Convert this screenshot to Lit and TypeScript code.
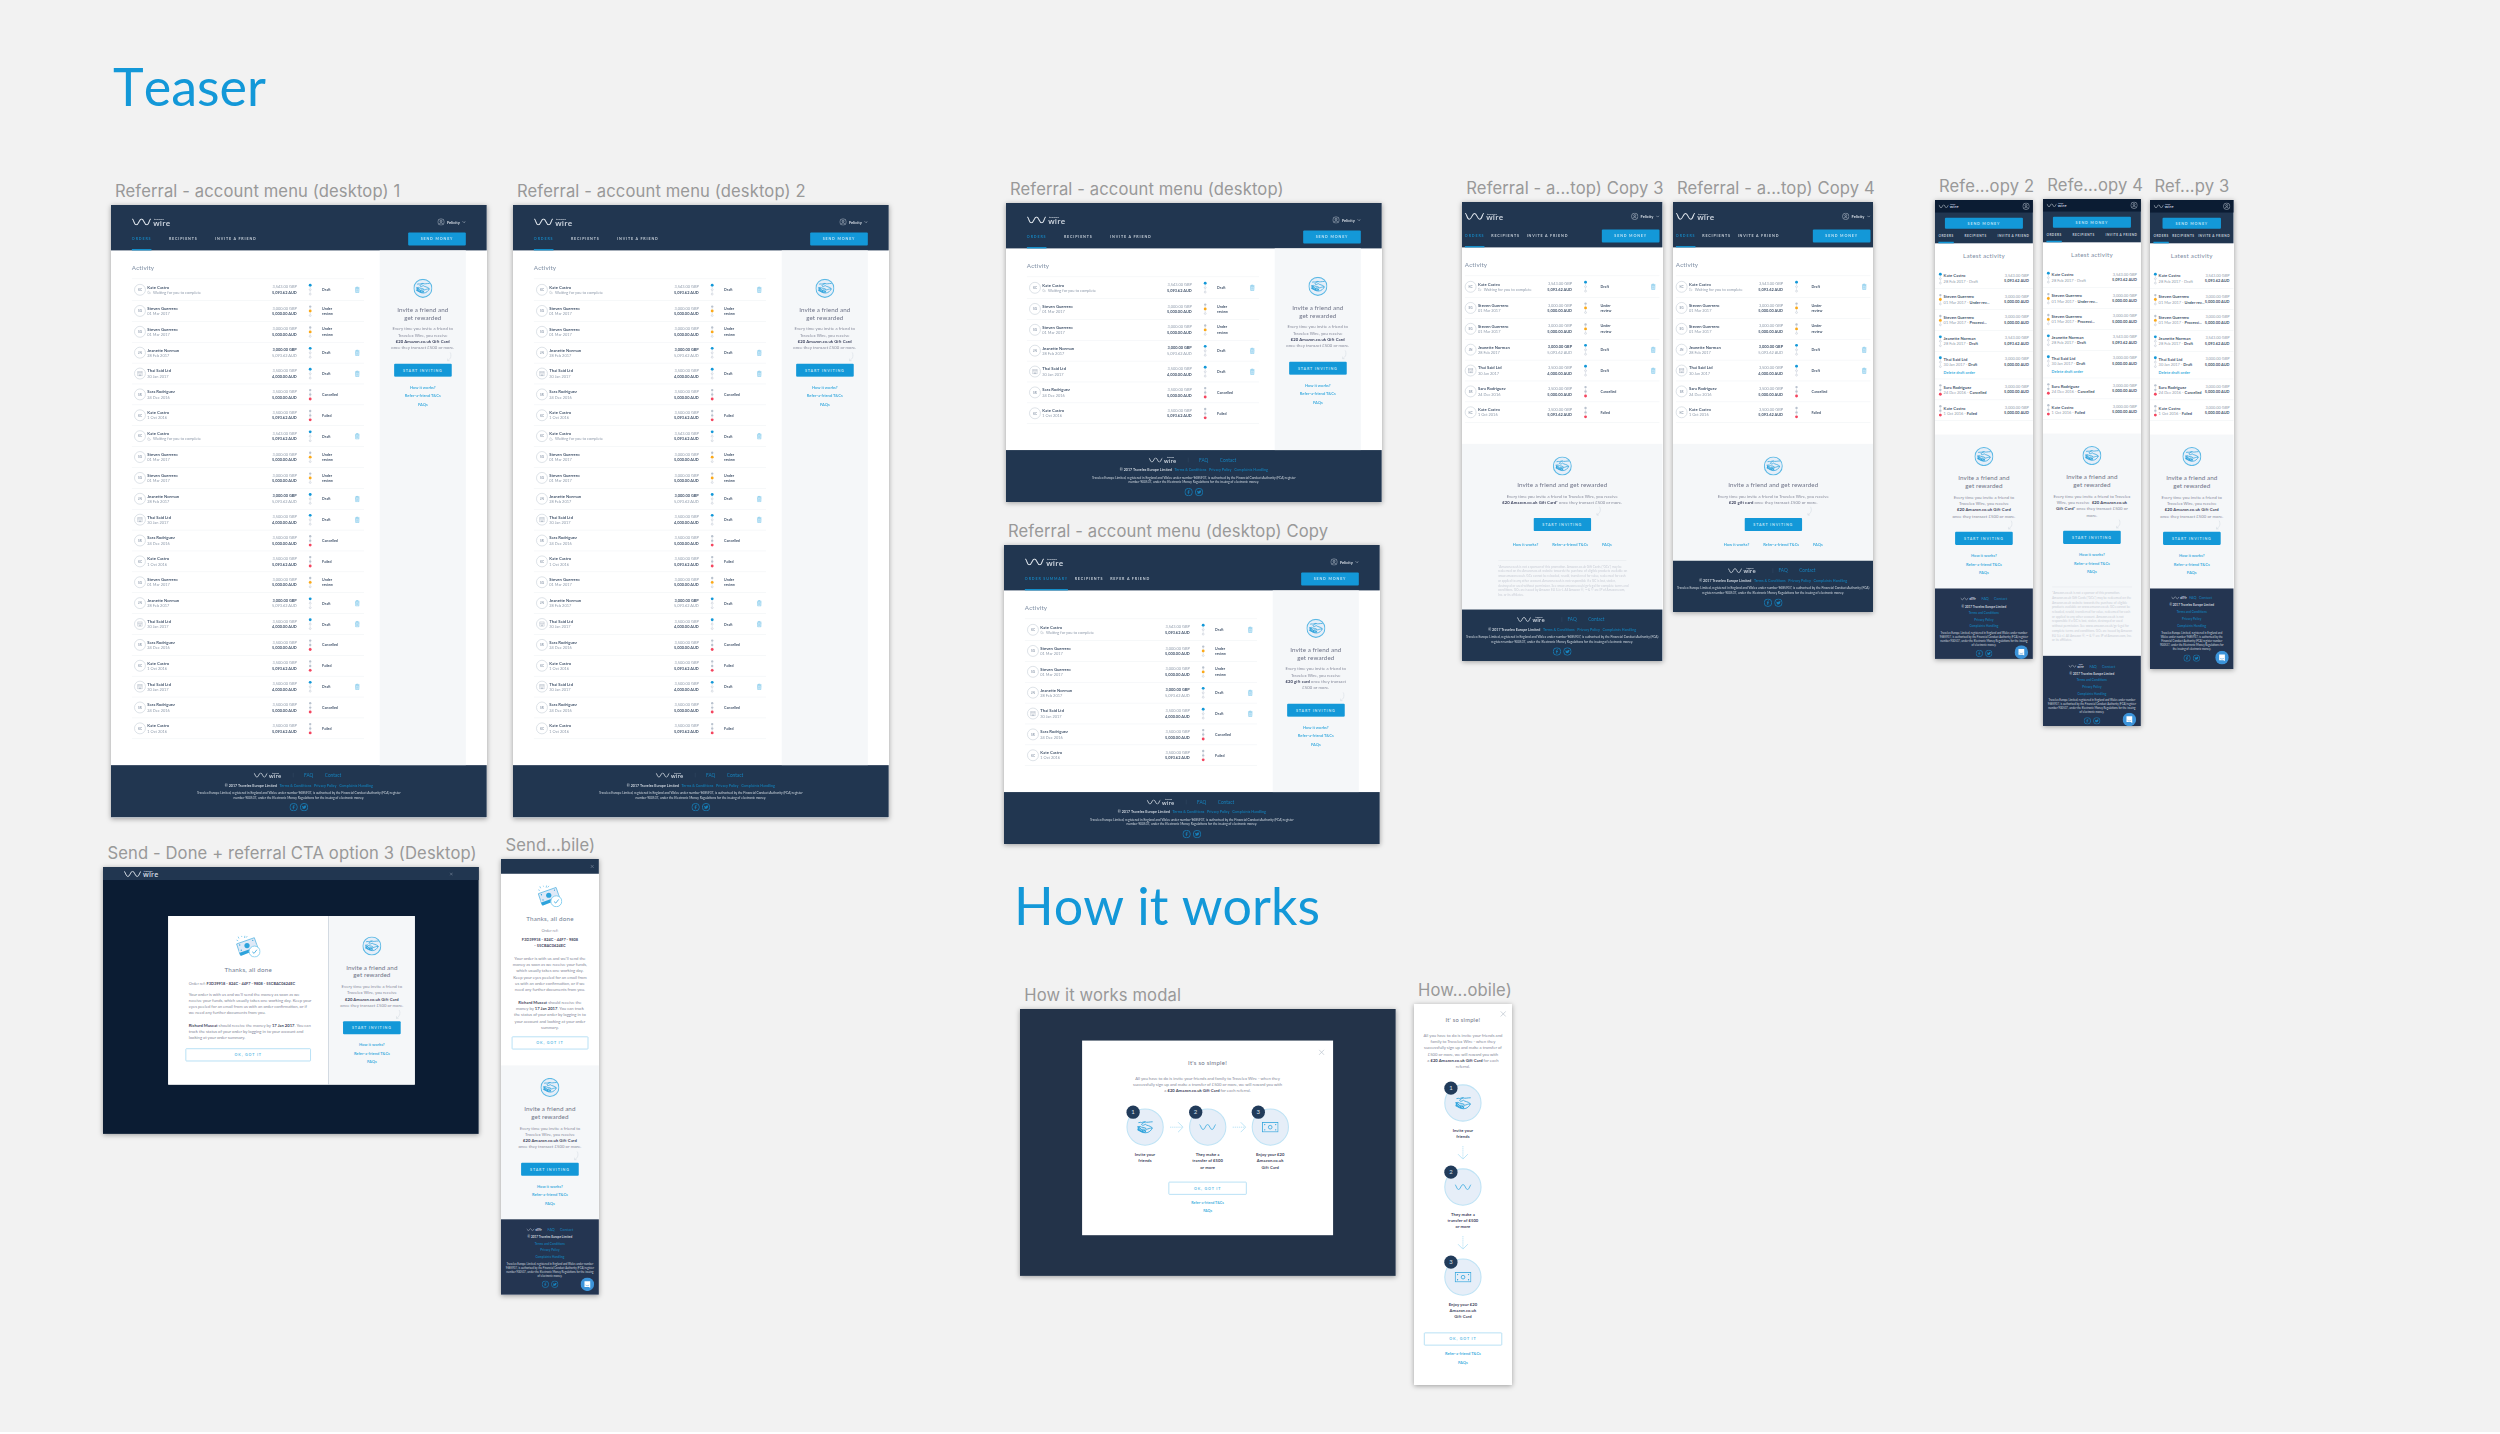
import { LitElement, html, css, svg, nothing } from 'lit'
import { customElement, property } from 'lit/decorators.js'

type Size = 'desktop' | 'tablet' | 'mobile' | 'small'

interface Order {
  initials: string
  name: string
  date: string
  from: string
  to: string
  state: 'draft' | 'review' | 'failed'
  status: string
  waiting?: boolean
  flip?: boolean
}

const kateDraft: Order = {
  initials: 'KC', name: 'Kate Castro', date: 'Waiting for you to complete',
  from: '3,543.00 GBP', to: '5,093.62 AUD', state: 'draft', status: 'Draft', waiting: true,
}
const steven: Order = {
  initials: 'SG', name: 'Steven Guerrero', date: '01 Mar 2017',
  from: '3,000.00 GBP', to: '5,000.00 AUD', state: 'review', status: 'Under review',
}
const jeanette: Order = {
  initials: 'JN', name: 'Jeanette Norman', date: '28 Feb 2017',
  from: '3,000.00 GBP', to: '5,093.62 AUD', state: 'draft', status: 'Draft', flip: true,
}
const thai: Order = {
  initials: '', name: 'Thai Said Ltd', date: '30 Jan 2017',
  from: '3,500.00 GBP', to: '4,000.00 AUD', state: 'draft', status: 'Draft',
}
const sara: Order = {
  initials: 'SR', name: 'Sara Rodriguez', date: '24 Dec 2016',
  from: '3,500.00 GBP', to: '5,000.00 AUD', state: 'failed', status: 'Cancelled',
}
const kateFailed: Order = {
  initials: 'KC', name: 'Kate Castro', date: '1 Oct 2016',
  from: '3,500.00 GBP', to: '5,093.62 AUD', state: 'failed', status: 'Failed',
}

const week = [kateDraft, steven, steven, jeanette, thai, sara, kateFailed]
const history = [
  ...week, ...week,
  steven, jeanette, thai, sara, kateFailed,
  thai, sara, kateFailed,
]

const mobileOrders = [
  { ...kateDraft, date: '28 Feb 2017', plain: true },
  { ...steven, status: 'Under rev...' },
  { ...steven, status: 'Processi...' },
  { ...jeanette, from: '3,543.00 GBP' },
  { ...thai, from: '3,000.00 GBP', to: '5,000.00 AUD', remove: true },
  { ...sara, from: '3,000.00 GBP' },
  { ...kateFailed, from: '3,000.00 GBP', to: '5,000.00 AUD' },
]

const wave = (color: string) => svg`
  <path d="M2 3 C7 3 8 25 17 25 C27 25 27 3 37 3 C47 3 47 25 57 25 C66 25 67 3 72 3"
    fill="none" stroke=${color} stroke-width="4" stroke-linecap="round" />`

const hands = svg`
  <g fill="none" stroke="#2ea3dc" stroke-width="3.2" stroke-linejoin="round" stroke-linecap="round">
    <path d="M7 7 L14 6 C18 9 23 3 30 4 C37 8 46 4 57 4" />
    <path d="M30 5 C24 7 19 10 17 14 C20 19 26 17 31 13 C36 19 49 17 57 26" />
    <path d="M3 22 L12 21 C18 27 28 23 34 29 C32 33 26 31 22 31" />
    <path d="M35 32 C43 31 49 26 57 27 C54 36 44 45 32 45 C20 45 12 38 3 34" />
  </g>
  <path d="M3 22 L11 24 L18 32 L35 36 L32 45 C20 45 12 38 3 34 Z" fill="#2ea3dc" />
  <path d="M7 28 L18 37 M22 37 L30 41" stroke="#e6eef8" stroke-width="2" />`

const note = svg`
  <g fill="none" stroke="#2ea3dc" stroke-width="3">
    <rect x="2" y="2" width="60" height="36" />
    <circle cx="32" cy="20" r="7" />
  </g>
  <g fill="#2ea3dc">
    <circle cx="11" cy="10" r="2.5" /><circle cx="53" cy="10" r="2.5" />
    <circle cx="11" cy="30" r="2.5" /><circle cx="53" cy="30" r="2.5" />
  </g>`

const cross = (size: number, color: string) => html`
  <svg width=${size} height=${size} viewBox="0 0 24 24">
    <path d="M2 2 L22 22 M22 2 L2 22" fill="none" stroke=${color} stroke-width="2.5" />
  </svg>`

const userIcon = html`
  <svg width="28" height="28" viewBox="0 0 28 28">
    <g fill="none" stroke="#c3ccd8" stroke-width="2">
      <circle cx="14" cy="14" r="12.5" />
      <circle cx="14" cy="11" r="3.8" />
      <path d="M8 21.5 C8 15.5 20 15.5 20 21.5" />
    </g>
  </svg>`

const base = css`
  :host {
    display: block;
    box-sizing: border-box;
  }
  *, *::before, *::after {
    box-sizing: border-box;
  }
  svg {
    display: block;
    flex: none;
  }
  p, h2 {
    margin: 0;
    font-weight: 400;
  }
  .cta {
    display: flex;
    align-items: center;
    justify-content: center;
    height: 50px;
    border-radius: 4px;
    background: #1398d8;
    color: #bfe3f5;
    font-size: 14px;
    font-weight: 700;
    letter-spacing: 3.2px;
    white-space: nowrap;
  }
  .cta.ghost {
    background: none;
    border: 3px solid #a5d9f2;
    color: #63bce6;
  }
  .link {
    color: #45afe0;
  }
  b {
    color: #3f4560;
  }
`

@customElement('wire-logo')
export class WireLogo extends LitElement {
  static styles = [base, css`
    .logo {
      display: flex;
      align-items: center;
      gap: 8px;
      color: #d3dae3;
    }
    .words {
      display: flex;
      flex-direction: column;
      font-family: "Open Sans", sans-serif;
    }
    .top {
      font-size: 9px;
      line-height: 5px;
      font-weight: 700;
      padding-left: 3px;
    }
    .main {
      font-size: 30px;
      line-height: 22px;
      font-weight: 600;
      letter-spacing: 0.6px;
    }
  `]

  render() {
    return html`
      <div class="logo">
        <svg width="74" height="28" viewBox="0 0 74 28">${wave('#dfe5ec')}</svg>
        <div class="words"><span class="top">travelex</span><span class="main">wire</span></div>
      </div>
    `
  }
}

@customElement('site-header')
export class SiteHeader extends LitElement {
  static styles = [base, css`
    .desktop {
      height: 174px;
      padding: 0 80px;
      background: #213650;
      display: flex;
      flex-direction: column;
    }
    .tablet {
      padding: 0 11px;
    }
    .brand {
      display: flex;
      justify-content: space-between;
      align-items: center;
      height: 60px;
      margin-top: 35px;
    }
    .tablet .brand {
      margin-top: 25px;
      margin-bottom: 10px;
    }
    .user {
      display: flex;
      align-items: center;
      color: #d5dce4;
      font-size: 15.5px;
      font-weight: 700;
      gap: 9px;
    }
    .bar {
      flex: 1;
      display: flex;
      justify-content: space-between;
    }
    .bar .cta {
      width: 221px;
      margin-top: 10px;
    }
    nav {
      display: flex;
      gap: 67px;
      color: #c3ccd6;
      font-size: 14px;
      font-weight: 700;
      letter-spacing: 3.2px;
      white-space: nowrap;
    }
    nav.tight {
      gap: 26px;
    }
    nav span {
      border-bottom: 5px solid transparent;
      line-height: 68px;
    }
    nav .on {
      color: #1681bb;
      border-color: #1398d8;
    }
    .mobile {
      height: 166px;
      background: #213650;
      display: flex;
      flex-direction: column;
    }
    .strip {
      height: 48px;
      padding: 0 12px 0 14px;
      background: #0b1c33;
      display: flex;
      align-items: center;
      justify-content: space-between;
    }
    .strip wire-logo {
      zoom: 0.52;
    }
    .mobile .cta {
      margin: 20px 38px 0;
      height: 42px;
    }
    .small .cta {
      margin: 20px 48px 0;
    }
    .mobile nav {
      margin: 8px 13px 0;
      gap: 0;
      justify-content: space-between;
      font-size: 12px;
      letter-spacing: 1.8px;
    }
    .mobile nav span {
      line-height: 42px;
      border-bottom-width: 6px;
    }
    .mobile nav .on {
      color: #c3ccd6;
    }
  `]

  @property() size: Size = 'desktop'
  @property({ type: Array }) tabs = ['ORDERS', 'RECIPIENTS', 'INVITE A FRIEND']
  @property({ type: Boolean }) tight = false

  render() {
    const nav = html`
      <nav class=${this.tight ? 'tight' : ''}>
        ${this.tabs.map((tab, i) => html`<span class=${i === 0 ? 'on' : ''}>${tab}</span>`)}
      </nav>`
    if (this.size === 'mobile' || this.size === 'small') {
      return html`
        <header class="mobile ${this.size}">
          <div class="strip"><wire-logo></wire-logo>${userIcon}</div>
          <div class="cta">SEND MONEY</div>
          ${nav}
        </header>`
    }
    return html`
      <header class="desktop ${this.size}">
        <div class="brand">
          <wire-logo></wire-logo>
          <div class="user">
            ${userIcon}<span>Felicity</span>
            <svg width="14" height="8" viewBox="0 0 14 8">
              <path d="M1 1 L7 7 L13 1" fill="none" stroke="#c3ccd8" stroke-width="2" />
            </svg>
          </div>
        </div>
        <div class="bar">${nav}<div class="cta">SEND MONEY</div></div>
      </header>`
  }
}

@customElement('status-dots')
export class StatusDots extends LitElement {
  static styles = [base, css`
    .dots {
      display: flex;
      flex-direction: column;
      align-items: center;
      width: 12px;
    }
    .dot {
      width: 9px;
      height: 9px;
      border-radius: 50%;
      background: #b9c2ce;
      margin: 1px 0;
    }
    .dot.open {
      background: #fff;
      border: 2px solid #b9c2ce;
    }
    .dot.on {
      width: 11px;
      height: 11px;
      margin: 0;
    }
    .line {
      width: 2px;
      height: 6px;
      background: #ccd3dc;
    }
    .draft {
      background: #1398d8;
    }
    .review {
      background: #fba919;
    }
    .failed {
      background: #f4455f;
    }
  `]

  @property() state: Order['state'] = 'draft'

  render() {
    const active = ['draft', 'review', 'failed'].indexOf(this.state)
    const dot = (i: number) =>
      html`<i class="dot ${i === active ? `on ${this.state}` : i > active ? 'open' : ''}"></i>`
    return html`
      <div class="dots">${dot(0)}<i class="line"></i>${dot(1)}<i class="line"></i>${dot(2)}</div>
    `
  }
}

@customElement('activity-list')
export class ActivityList extends LitElement {
  static styles = [base, css`
    h2 {
      font-size: 24px;
      letter-spacing: 0.6px;
      line-height: 30px;
      padding: 53px 0 25px;
      color: #7d8da3;
    }
    .row {
      display: flex;
      align-items: center;
      height: 80px;
      border-bottom: 2px solid #eef1f4;
    }
    .row:first-of-type {
      height: 85px;
      border-top: 2px solid #eef1f4;
    }
    .avatar {
      width: 44px;
      height: 44px;
      margin-left: 9px;
      border: 2px solid #c0c8d3;
      border-radius: 50%;
      display: flex;
      align-items: center;
      justify-content: center;
      font-size: 12px;
      font-weight: 700;
      color: #98a4b4;
    }
    .who {
      width: 260px;
      margin-left: 6px;
      line-height: 21px;
    }
    .name {
      font-size: 16px;
      font-weight: 700;
      color: #47586f;
    }
    .sub {
      display: flex;
      align-items: center;
      gap: 8px;
      font-size: 15px;
      color: #8f9bab;
      white-space: nowrap;
    }
    .money {
      width: 313px;
      text-align: right;
      font-size: 15px;
      line-height: 21px;
      color: #8f9bab;
    }
    .money .strong {
      font-weight: 700;
      color: #47586f;
    }
    status-dots {
      margin-left: 45px;
    }
    .status {
      width: 60px;
      margin-left: 40px;
      font-size: 14px;
      line-height: 21px;
      font-weight: 700;
      color: #47586f;
    }
    .trash {
      margin-left: 65px;
    }
    .tablet .avatar {
      margin-left: 0;
    }
    .tablet .money {
      width: 101px;
    }
    .tablet .status {
      margin-left: 52px;
    }
    .tablet .trash {
      margin-left: 132px;
    }
  `]

  @property() size: Size = 'desktop'
  @property({ type: Array }) orders: Order[] = week

  render() {
    return html`
      <h2>Activity</h2>
      <div class=${this.size}>${this.orders.map((o) => this.renderRow(o))}</div>
    `
  }

  renderRow(o: Order) {
    return html`
      <div class="row">
        <div class="avatar">${o.initials || html`
          <svg width="20" height="20" viewBox="0 0 20 20">
            <path d="M1 1 H19 V19 H1 Z M1 7 H19 M5 12 H8 M12 12 H15 M8 19 V15 H12 V19"
              fill="none" stroke="#98a4b4" stroke-width="2" />
          </svg>`}</div>
        <div class="who">
          <div class="name">${o.name}</div>
          <div class="sub">
            ${o.waiting ? html`
              <svg width="14" height="14" viewBox="0 0 14 14">
                <path d="M7 1 A6 6 0 1 0 13 7 M7 4 V7 H10" fill="none" stroke="#9aa5b4" stroke-width="1.5" />
              </svg>` : nothing}
            <span>${o.date}</span>
          </div>
        </div>
        <div class="money">
          <div class=${o.flip ? 'strong' : ''}>${o.from}</div>
          <div class=${o.flip ? '' : 'strong'}>${o.to}</div>
        </div>
        <status-dots .state=${o.state}></status-dots>
        <div class="status">${o.status}</div>
        ${o.state === 'draft' ? html`
          <svg class="trash" width="20" height="25" viewBox="0 0 20 25">
            <path d="M1 5 H19 M7 5 V1.5 H13 V5 M3 8 L4 23.5 H16 L17 8 Z M8 11 V20 M12 11 V20"
              fill="#e3f3fc" stroke="#6fc1e8" stroke-width="2" />
          </svg>` : nothing}
      </div>`
  }
}

@customElement('mobile-activity')
export class MobileActivity extends LitElement {
  static styles = [base, css`
    h2 {
      padding-top: 31px;
      line-height: 30px;
      margin-bottom: 34px;
      text-align: center;
      font-size: 24px;
      letter-spacing: 0.9px;
      color: #7d8da3;
    }
    .row {
      display: flex;
      padding: 19px 15px 0 14px;
      height: 80px;
      border-bottom: 2px solid #eef1f4;
      line-height: 21px;
      font-size: 15px;
      color: #8f9bab;
    }
    .row.tall {
      height: 106px;
    }
    .row status-dots {
      margin: -1px 7px 0 0;
    }
    .who {
      flex: 1;
      white-space: nowrap;
    }
    .name {
      font-size: 16px;
      font-weight: 700;
      color: #47586f;
    }
    .strong {
      font-weight: 700;
      color: #47586f;
    }
    .remove {
      line-height: 38px;
      font-weight: 700;
    }
    .money {
      text-align: right;
      margin-top: -2px;
    }
  `]

  render() {
    return html`
      <h2>Latest activity</h2>
      ${mobileOrders.map((o: any) => html`
        <div class="row ${o.remove ? 'tall' : ''}">
          <status-dots .state=${o.state}></status-dots>
          <div class="who">
            <div class="name">${o.name}</div>
            <div>${o.date} - <span class=${o.plain ? '' : 'strong'}>${o.status}</span></div>
            ${o.remove ? html`<div class="link remove">Delete draft order</div>` : nothing}
          </div>
          <div class="money"><div>${o.from}</div><div class="strong">${o.to}</div></div>
        </div>`)}
    `
  }
}

@customElement('invite-panel')
export class InvitePanel extends LitElement {
  static styles = [base, css`
    :host {
      background: #f5f7f9;
      text-align: center;
    }
    .panel {
      display: flex;
      flex-direction: column;
      align-items: center;
      padding-top: 48px;
      white-space: nowrap;
    }
    h2 {
      margin-top: 30px;
      font-size: 24px;
      line-height: 29px;
      letter-spacing: 0.3px;
      color: #6f7488;
    }
    .copy {
      margin-top: 19px;
      font-size: 16px;
      line-height: 24px;
      letter-spacing: 0.25px;
      color: #85899a;
    }
    .act {
      position: relative;
      margin-top: 49px;
    }
    .act .cta {
      width: 221px;
    }
    .hook {
      position: absolute;
      right: 0;
      top: -45px;
    }
    .links {
      margin-top: 25px;
      display: flex;
      flex-direction: column;
      font-size: 15.5px;
      font-weight: 700;
      line-height: 32px;
    }
    .tablet h2 {
      margin-top: 20px;
    }
    .tablet .act {
      margin-top: 47px;
    }
    .tablet .hook {
      right: -38px;
    }
    .tablet .links {
      flex-direction: row;
      margin-top: 37px;
      gap: 53px;
    }
    .legal {
      width: 306px;
      margin-top: 43px;
      padding-top: 14px;
      border-top: 2px solid #e4e8ec;
      text-align: left;
      font-size: 12px;
      line-height: 18px;
      color: #c9cdd6;
    }
    .tablet .legal {
      width: 491px;
    }
  `]

  @property() size: Size = 'desktop'
  @property() variant: 'amazon' | 'star' | 'gift' = 'amazon'

  get copy() {
    if (this.size === 'tablet') {
      return html`Every time you invite a friend to Travelex Wire, you receive<br>
        <b>${this.variant === 'gift' ? '£20 gift card' : '£20 Amazon.co.uk Gift Card*'}</b> once they transact £500 or more.`
    }
    if (this.variant === 'gift') {
      return html`Every time you invite a friend to<br>Travelex Wire, you receive<br>
        <b>£20 gift card</b> once they transact<br>£500 or more.`
    }
    if (this.variant === 'star') {
      return html`Every time you invite a friend to Travelex<br>Wire, you receive &nbsp;<b>£20 Amazon.co.uk<br>
        Gift Card*</b> once they transact £500 or<br>more.`
    }
    return html`Every time you invite a friend to<br>Travelex Wire, you receive<br>
      <b>£20 Amazon.co.uk Gift Card</b><br>once they transact £500 or more.`
  }

  get legal() {
    return this.size === 'tablet'
      ? html`*Amazon.co.uk is not a sponsor of this promotion. Amazon.co.uk Gift Cards ("GCs") may be<br>
          redeemed on the Amazon.co.uk website towards the purchase of eligible products available on<br>
          www.amazon.co.uk. GCs cannot be reloaded, resold, transferred for value, redeemed for cash<br>
          or applied to any other account. Amazon.co.uk is not responsible if a GC is lost, stolen,<br>
          destroyed or used without permission. See www.amazon.co.uk/gc-legal for complete terms and<br>
          conditions. GCs are issued by Amazon EU S.à r.l. All Amazon ®, ™ & © are IP of Amazon.com,<br>
          Inc. or its affiliates.`
      : html`*Amazon.co.uk is not a sponsor of this promotion.<br>
          Amazon.co.uk Gift Cards ("GCs") may be redeemed on the<br>
          Amazon.co.uk website towards the purchase of eligible<br>
          products available on www.amazon.co.uk. GCs cannot be<br>
          reloaded, resold, transferred for value, redeemed for cash<br>
          or applied to any other account. Amazon.co.uk is not<br>
          responsible if a GC is lost, stolen, destroyed or used<br>
          without permission. See www.amazon.co.uk/gc-legal for<br>
          complete terms and conditions. GCs are issued by Amazon<br>
          EU S.à r.l. All Amazon ®, ™ & © are IP of Amazon.com, Inc.<br>
          or its affiliates.`
  }

  render() {
    return html`
      <div class="panel ${this.size}">
        <svg width="73" height="73" viewBox="0 0 73 73">
          <circle cx="36.5" cy="36.5" r="34.5" fill="#e6eef8" stroke="#5cb9e5" stroke-width="4" />
          <g transform="translate(9.5 14) scale(0.9)">${hands}</g>
        </svg>
        <h2>${this.size === 'tablet' ? 'Invite a friend and get rewarded' : html`Invite a friend and<br>get rewarded`}</h2>
        <p class="copy">${this.copy}</p>
        <div class="act">
          <svg class="hook" width="20" height="38" viewBox="0 0 20 38">
            <path d="M14 2 C22 16 14 28 4 34 M4 26 L4 34 L12 34" fill="none" stroke="#d3dae2" stroke-width="2" />
          </svg>
          <div class="cta">START INVITING</div>
        </div>
        <div class="links link"><span>How it works?</span><span>Refer-a-friend T&Cs</span><span>FAQs</span></div>
        ${this.variant === 'star' ? html`<p class="legal">${this.legal}</p>` : nothing}
      </div>
    `
  }
}

@customElement('site-footer')
export class SiteFooter extends LitElement {
  static styles = [base, css`
    footer {
      display: flex;
      flex-direction: column;
      align-items: center;
      height: 200px;
      background: #213650;
      color: #c9d1da;
      white-space: nowrap;
      text-align: center;
      font-size: 14px;
      line-height: 24px;
    }
    .top {
      display: flex;
      align-items: center;
      width: 346px;
      height: 30px;
      margin-top: 23px;
      font-size: 18px;
      color: #1683be;
    }
    .top wire-logo {
      zoom: 0.72;
    }
    .rule {
      width: 2px;
      height: 18px;
      margin: 0 41px 0 44px;
      background: #344a66;
    }
    .tablet .rule {
      margin: 0 20px 0 65px;
    }
    .top .contact {
      margin-left: 44px;
    }
    .copyright {
      display: flex;
      gap: 10px;
      margin-top: 12px;
      font-weight: 700;
    }
    .terms {
      display: flex;
      gap: 10px;
      color: #1478ae;
    }
    .reg {
      margin-top: 8px;
      font-size: 12.3px;
      line-height: 18px;
      color: #cfd7df;
    }
    .social {
      display: flex;
      gap: 8px;
      margin-top: 12px;
    }
    .mobile {
      position: relative;
      height: 270px;
      background: #243551;
    }
    .small {
      height: 309px;
    }
    .mobile .top {
      width: auto;
      margin-top: 25px;
      font-size: 14.5px;
    }
    .mobile .top wire-logo {
      zoom: 0.4;
    }
    .mobile .faq {
      margin-left: 21px;
    }
    .mobile .contact {
      margin-left: 20px;
    }
    .mobile .copyright {
      flex-direction: column;
      gap: 0;
      margin-top: 3px;
      font-size: 12px;
      line-height: 22px;
    }
    .mobile .terms {
      flex-direction: column;
      gap: 0;
      line-height: 26px;
    }
    .mobile .reg {
      margin-top: 6px;
      font-size: 10.6px;
      line-height: 15px;
    }
    .mobile .social {
      margin-top: 11px;
    }
    .mobile.small .top {
      margin-top: 21px;
    }
    .small .faq,
    .small .contact {
      margin-left: 9px;
    }
    .mobile.small .terms {
      line-height: 27.5px;
    }
    .mobile.small .social {
      margin-top: 13px;
    }
    .chat {
      position: absolute;
      right: 18px;
      bottom: 0;
    }
    .small .chat {
      bottom: 18px;
    }
    .raised .chat {
      bottom: 14px;
    }
    .mobile.raised {
      height: 289px;
    }
  `]

  @property() size: Size = 'desktop'
  @property({ type: Boolean }) raised = false

  get registration() {
    switch (this.size) {
      case 'small':
        return html`Travelex Europe Limited, registered in England and<br>Wales under number 9685937, is authorised by the<br>
          Financial Conduct Authority (FCA) register number<br>900537, under the Electronic Money Regulations for<br>the issuing of electronic money.`
      case 'mobile':
        return html`Travelex Europe Limited, registered in England and Wales under number<br>9685937, is authorised by the Financial Conduct Authority (FCA) register<br>
          number 900537, under the Electronic Money Regulations for the issuing<br>of electronic money.`
      case 'tablet':
        return html`Travelex Europe Limited, registered in England and Wales under number 9685937, is authorised by the Financial Conduct Authority (FCA)<br>
          register number 900537, under the Electronic Money Regulations for the issuing of electronic money.`
      default:
        return html`Travelex Europe Limited, registered in England and Wales under number 9685937, is authorised by the Financial Conduct Authority (FCA) register<br>
          number 900537, under the Electronic Money Regulations for the issuing of electronic money.`
    }
  }

  render() {
    const compact = this.size === 'mobile' || this.size === 'small'
    const d = compact ? 28 : 32
    return html`
      <footer class="${compact ? 'mobile' : ''} ${this.size} ${this.raised ? 'raised' : ''}">
        <div class="top">
          <wire-logo></wire-logo>
          ${compact ? nothing : html`<i class="rule"></i>`}
          <span class="faq">FAQ</span><span class="contact">Contact</span>
        </div>
        <div class="copyright">
          <span>© 2017 Travelex Europe Limited</span>
          <span class="terms">
            <span>${compact ? 'Terms and Conditions' : 'Terms & Conditions'}</span>
            <span>Privacy Policy</span><span>Complaints Handling</span>
          </span>
        </div>
        <p class="reg">${this.registration}</p>
        <div class="social">
          <svg width=${d} height=${d} viewBox="0 0 32 32">
            <circle cx="16" cy="16" r="14.5" fill="none" stroke="#1683be" stroke-width="3" />
            <path d="M20 9 H18 C16 9 15 10 15 12 V24 M12 16 H20" fill="none" stroke="#1683be" stroke-width="3" />
          </svg>
          <svg width=${d} height=${d} viewBox="0 0 32 32">
            <circle cx="16" cy="16" r="14.5" fill="none" stroke="#1683be" stroke-width="3" />
            <path d="M8 20 C11 20 12 19 12 19 C9 18 8 14 9 11 C11 13 13 14 16 14 C16 10 20 9 22 11 L25 10 L23 14 C23 22 14 25 8 20 Z" fill="#1683be" />
          </svg>
        </div>
        ${compact ? html`
          <svg class="chat" width="52" height="52" viewBox="0 0 52 52">
            <circle cx="26" cy="26" r="26" fill="#3c94da" />
            <path d="M15 14 H37 V39 L31 36 H15 Z" fill="#fff" />
            <path d="M19 29 C23 32 29 32 33 29" fill="none" stroke="#3c94da" stroke-width="2" />
          </svg>` : nothing}
      </footer>
    `
  }
}

@customElement('done-panel')
export class DonePanel extends LitElement {
  static styles = [base, css`
    :host {
      background: #fff;
    }
    .done {
      display: flex;
      flex-direction: column;
      align-items: center;
      padding: 75px 67px 0;
      color: #85899a;
      font-size: 16px;
      line-height: 24px;
      white-space: nowrap;
    }
    h2 {
      margin-top: 30px;
      font-size: 24px;
      line-height: 30px;
      letter-spacing: 0.8px;
      color: #6f7d92;
    }
    p {
      width: 456px;
    }
    .ref {
      margin-top: 26px;
      font-size: 15px;
    }
    .text {
      margin-top: 18px;
    }
    .text + .text {
      margin-top: 24px;
    }
    .cta {
      width: 481px;
      margin-top: 28px;
    }
    .mobile {
      padding: 44px 40px 0;
      text-align: center;
    }
    .mobile h2 {
      margin-top: 27px;
    }
    .mobile p {
      width: auto;
    }
    .mobile .ref {
      margin-top: 20px;
    }
    .mobile .ref b {
      display: block;
      margin-top: 10px;
    }
    .mobile .text {
      margin-top: 25px;
    }
    .mobile .text + .text {
      margin-top: 24px;
    }
    .mobile .cta {
      width: 294px;
      margin-top: 23px;
    }
  `]

  @property() size: Size = 'desktop'

  render() {
    const mobile = this.size === 'mobile'
    return html`
      <div class="done ${this.size}">
        <svg width="94" height="84" viewBox="0 0 94 84">
          <path d="M8 4 L11 11 M21 1 L22 5 M34 0 L32 9 M2 17 L8 20 M43 2 L38 8" stroke="#6fc3ea" stroke-width="3" />
          <path d="M2 32 L70 8 L84 48 L16 74 Z" fill="#dfe9f7" stroke="#53b4e2" stroke-width="3" />
          <path d="M12 64 L78 38 L84 52 L18 78 Z" fill="#2ea3dc" />
          <path d="M10 58 L78 34 L80 42 L14 66 Z" fill="#dfe9f7" />
          <circle cx="42" cy="38" r="10" fill="#2ea3dc" />
          <g fill="#2ea3dc"><circle cx="14" cy="36" r="2.5" /><circle cx="64" cy="18" r="2.5" /><circle cx="20" cy="56" r="2.5" /></g>
          <circle cx="71" cy="61" r="21" fill="#fff" stroke="#7ccbee" stroke-width="3.5" />
          <path d="M62 62 L69 68 L80 54" fill="none" stroke="#2ea3dc" stroke-width="3" />
        </svg>
        <h2>Thanks, all done</h2>
        <p class="ref">Order ref: ${mobile
          ? html`<b>F3D39918 - 824C - 44F7 - 9808<br>- 55CBAC0624EC</b>`
          : html`<b>F3D39918 - 824C - 44F7 - 9808 - 55CBAC0624EC</b>`}</p>
        <p class="text">${mobile
          ? html`Your order is with us and we'll send the<br>money as soon as we receive your funds,<br>
              which usually takes one working day.<br>Keep your eyes peeled for an email from<br>
              us with an order confirmation, or if we<br>need any further documents from you.`
          : html`Your order is with us and we'll send the money as soon as we<br>
              receive your funds, which usually takes one working day. Keep your<br>
              eyes peeled for an email from us with an order confirmation, or if<br>
              we need any further documents from you.`}</p>
        <p class="text">${mobile
          ? html`<b>Richard Muscat</b> should receive the<br>money by <b>17 Jan 2017</b>. You can track<br>
              the status of your order by logging in to<br>your account and looking at your order<br>summary.`
          : html`<b>Richard Muscat</b> should receive the money by <b>17 Jan 2017</b>. You can<br>
              track the status of your order by logging in to your account and<br>
              looking at your order summary.`}</p>
        <div class="cta ghost">OK, GOT IT</div>
      </div>
    `
  }
}

@customElement('how-panel')
export class HowPanel extends LitElement {
  static styles = [base, css`
    :host {
      background: #fff;
    }
    .how {
      position: relative;
      display: flex;
      flex-direction: column;
      align-items: center;
      padding-top: 71px;
      text-align: center;
      color: #85899a;
      font-size: 16px;
      line-height: 24px;
      white-space: nowrap;
    }
    .close {
      position: absolute;
      right: 32px;
      top: 33px;
    }
    h2 {
      font-size: 23px;
      line-height: 30px;
      letter-spacing: 1px;
      color: #6f7488;
    }
    .lead {
      margin-top: 31px;
    }
    .steps {
      display: flex;
      margin-top: 56px;
    }
    .step {
      width: 143px;
      height: 240px;
      color: #3f4560;
      font-weight: 700;
      letter-spacing: 0.2px;
    }
    .disc {
      position: relative;
      width: 143px;
      height: 143px;
      margin-bottom: 22px;
      border: 4px solid #bfe3f5;
      border-radius: 50%;
      background: #e6eef8;
      display: flex;
      align-items: center;
      justify-content: center;
    }
    .num {
      position: absolute;
      left: -4px;
      top: -15px;
      width: 51px;
      height: 51px;
      border-radius: 50%;
      background: #213b5a;
      color: #d8e0ea;
      font-size: 23px;
      line-height: 51px;
      font-weight: 400;
    }
    .arrow {
      margin: 50px 20px 0 22px;
    }
    .cta {
      width: 300px;
      margin-top: 41px;
    }
    .links {
      display: flex;
      flex-direction: column;
      margin-top: 13px;
      line-height: 32px;
      font-size: 14px;
      font-weight: 700;
    }
    .mobile {
      padding-top: 47px;
    }
    .mobile .close {
      right: 21px;
      top: 26px;
    }
    .mobile h2 {
      font-size: 22px;
    }
    .mobile .steps {
      flex-direction: column;
      align-items: center;
      margin-top: 56px;
    }
    .mobile .step {
      height: 213px;
    }
    .mobile .step ~ .step {
      height: 236px;
    }
    .mobile .disc {
      margin-bottom: 20px;
    }
    .mobile .arrow {
      margin: 27px 0 38px;
      transform: rotate(90deg);
    }
    .mobile .cta {
      margin-top: 48px;
    }
    .mobile .links {
      font-size: 15.5px;
      margin-top: 15px;
    }
  `]

  @property() size: Size = 'desktop'

  render() {
    const mobile = this.size === 'mobile'
    const arrow = html`
      <svg class="arrow" width="55" height="44" viewBox="0 0 55 44">
        <path d="M2 22 H50" fill="none" stroke="#a9dcf3" stroke-width="3" stroke-dasharray="5 3" />
        <path d="M33 3 L52 22 L33 41" fill="none" stroke="#a9dcf3" stroke-width="3" />
      </svg>`
    const step = (n: number, icon: unknown, label: unknown) => html`
      <div class="step">
        <div class="disc"><span class="num">${n}</span>${icon}</div>
        ${label}
      </div>`
    return html`
      <div class="how ${this.size}">
        <div class="close">${cross(24, '#b5bfcb')}</div>
        <h2>${mobile ? "It' so simple!" : "It's so simple!"}</h2>
        <p class="lead">${mobile
          ? html`All you have to do is invite your friends and<br>family to Travelex Wire - when they<br>
              successfully sign up and make a transfer of<br>£500 or more, we will reward you with<br>
              a <b>£20 Amazon.co.uk Gift Card</b> for each<br>referral.`
          : html`All you have to do is invite your friends and family to Travelex Wire - when they<br>
              successfully sign up and make a transfer of £500 or more, we will reward you with<br>
              a <b>£20 Amazon.co.uk Gift Card</b> for each referral.`}</p>
        <div class="steps">
          ${step(1, html`<svg width="62" height="50" viewBox="0 0 60 48">${hands}</svg>`, html`Invite your<br>friends`)}
          ${arrow}
          ${step(2, html`<svg width="64" height="25" viewBox="0 0 74 28">${wave('#4fb3e2')}</svg>`, html`They make a<br>transfer of £500<br>or more`)}
          ${arrow}
          ${step(3, html`<svg width="64" height="40" viewBox="0 0 64 40">${note}</svg>`, html`Enjoy your £20<br>Amazon.co.uk<br>Gift Card`)}
        </div>
        <div class="cta ghost">OK, GOT IT</div>
        <div class="links link"><span>Refer-a-friend T&Cs</span><span>FAQs</span></div>
      </div>
    `
  }
}

// One labelled screen on the canvas, laid out at full size and shrunk to the canvas zoom level.
@customElement('art-board')
export class ArtBoard extends LitElement {
  static zoom = 0.2609

  static styles = [base, css`
    :host {
      position: absolute;
    }
    .label {
      position: absolute;
      left: 4px;
      bottom: 100%;
      padding-bottom: 4px;
      color: #999;
      font: 16.6px/20px Inter, sans-serif;
      letter-spacing: 0.12px;
      white-space: nowrap;
    }
    .frame {
      overflow: hidden;
      background: #fff;
      box-shadow: 0 1px 5px rgba(0, 0, 0, 0.35);
    }
    .screen {
      transform-origin: 0 0;
    }
  `]

  @property() label = ''
  @property({ type: Number }) w = 1440
  @property({ type: Number }) h = 1024

  render() {
    const k = ArtBoard.zoom
    return html`
      <div class="label">${this.label}</div>
      <div class="frame" style="width:${this.w * k}px;height:${this.h * k}px">
        <div class="screen" style="width:${this.w}px;height:${this.h}px;transform:scale(${k})"><slot></slot></div>
      </div>
    `
  }
}

@customElement('app-root')
export class AppRoot extends LitElement {
  static styles = [base, css`
    :host {
      position: relative;
      width: 2500px;
      height: 1434px;
      overflow: hidden;
      background: #f2f2f2;
      border-bottom: 2px solid #fff;
      font-family: Lato, sans-serif;
    }
    .title {
      position: absolute;
      font-size: 52px;
      line-height: 60px;
      color: #1398d8;
      white-space: nowrap;
      font-kerning: none;
    }
    .body {
      display: flex;
      padding: 0 80px;
      justify-content: space-between;
    }
    .body activity-list {
      width: 890px;
      padding-bottom: 100px;
    }
    .body invite-panel {
      width: 330px;
      padding-top: 61px;
    }
    .column {
      padding: 0 11px 80px;
    }
    .tab-panel {
      height: 448px;
    }
    .tab-panel.long {
      height: 635px;
    }
    mobile-activity {
      padding-bottom: 52px;
    }
    .m-panel {
      height: 590px;
    }
    .m-panel.long {
      height: 852px;
    }
    .navy {
      height: 100%;
      background: #0b1c33;
    }
    .navbar {
      display: flex;
      align-items: center;
      justify-content: space-between;
      height: 50px;
      padding: 4px 98px 0 80px;
      margin-bottom: 138px;
      background: #213650;
    }
    .navbar wire-logo {
      zoom: 0.9;
    }
    .modal {
      display: flex;
      width: 945px;
      height: 646px;
      margin-left: 250px;
      background: #fff;
    }
    .modal done-panel {
      width: 613px;
    }
    .modal invite-panel {
      width: 332px;
      padding-top: 30px;
      border-left: 3px solid #c9d1dc;
    }
    .m-bar {
      display: flex;
      align-items: center;
      justify-content: flex-end;
      height: 57px;
      padding-right: 18px;
      background: #213650;
    }
    .m-done {
      height: 734px;
    }
    .slate {
      height: 100%;
      padding: 121px 240px 0 238px;
      background: #233349;
    }
    .slate how-panel {
      height: 746px;
    }
  `]

  board(label: string, x: number, y: number, w: number, h: number, content: unknown) {
    return html`
      <art-board .label=${label} .w=${w} .h=${h} style="left:${x}px;top:${y}px">${content}</art-board>`
  }

  desktop(orders: Order[], copy = false) {
    return html`
      <site-header .tight=${copy}
        .tabs=${copy ? ['ORDER SUMMARY', 'RECIPIENTS', 'REFER A FRIEND'] : ['ORDERS', 'RECIPIENTS', 'INVITE A FRIEND']}></site-header>
      <div class="body">
        <activity-list .orders=${orders}></activity-list>
        <invite-panel variant=${copy ? 'gift' : 'amazon'}></invite-panel>
      </div>
      <site-footer></site-footer>`
  }

  tablet(variant: string) {
    return html`
      <site-header size="tablet" tight></site-header>
      <div class="column"><activity-list size="tablet"></activity-list></div>
      <invite-panel class="tab-panel ${variant === 'star' ? 'long' : ''}" size="tablet" variant=${variant}></invite-panel>
      <site-footer size="tablet"></site-footer>`
  }

  mobile(size: Size, variant = 'amazon') {
    return html`
      <site-header size=${size}></site-header>
      <mobile-activity></mobile-activity>
      <invite-panel class="m-panel ${variant === 'star' ? 'long' : ''}" size=${size} variant=${variant}></invite-panel>
      <site-footer size=${size}></site-footer>`
  }

  render() {
    return html`
      <div class="title" style="left:113px;top:56px">Teaser</div>
      <div class="title" style="left:1014px;top:875px">How it works</div>
      ${this.board('Referral - account menu (desktop) 1', 111, 205.4, 1440, 2347, this.desktop(history))}
      ${this.board('Referral - account menu (desktop) 2', 513, 205.4, 1440, 2347, this.desktop(history))}
      ${this.board('Referral - account menu (desktop)', 1006, 203, 1440, 1147, this.desktop(week))}
      ${this.board('Referral - account menu (desktop) Copy', 1004, 545, 1440, 1147, this.desktop(week, true))}
      ${this.board('Referral - a...top) Copy 3', 1462.3, 202, 768, 1761, this.tablet('star'))}
      ${this.board('Referral - a...top) Copy 4', 1673, 201.6, 768, 1574, this.tablet('gift'))}
      ${this.board('Refe...opy 2', 1935, 200.4, 375, 1758, this.mobile('mobile'))}
      ${this.board('Refe...opy 4', 2043.3, 199.4, 375, 2020, this.mobile('mobile', 'star'))}
      ${this.board('Ref...py 3', 2150.4, 200.4, 320, 1797, this.mobile('small'))}
      ${this.board('Send - Done + referral CTA option 3 (Desktop)', 103.4, 867.4, 1440, 1023, html`
        <div class="navy">
          <div class="navbar"><wire-logo></wire-logo>${cross(14, '#9fadbd')}</div>
          <div class="modal">
            <done-panel></done-panel>
            <invite-panel></invite-panel>
          </div>
        </div>`)}
      ${this.board('Send...bile)', 501.4, 859.4, 375, 1669, html`
        <div class="m-bar">${cross(15, '#9fadbd')}</div>
        <done-panel class="m-done" size="mobile"></done-panel>
        <invite-panel class="m-panel" size="mobile"></invite-panel>
        <site-footer size="mobile" raised></site-footer>`)}
      ${this.board('How it works modal', 1020.3, 1009.4, 1440, 1023, html`
        <div class="slate"><how-panel></how-panel></div>`)}
      ${this.board('How...obile)', 1414, 1003.6, 375, 1463, html`
        <how-panel size="mobile"></how-panel>`)}
    `
  }
}
